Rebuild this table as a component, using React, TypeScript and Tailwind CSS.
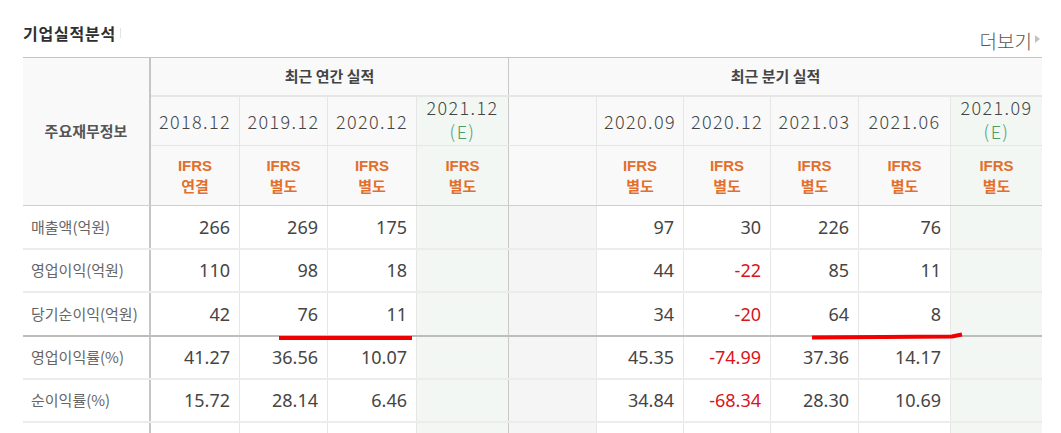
const KR = "font-['Noto_Sans_CJK_KR',sans-serif]";
const NUM = "font-['Noto_Sans','Noto_Sans_CJK_KR',sans-serif]";

type Val = string | number;

const annualDates = [
  { d: "2018.12", e: false },
  { d: "2019.12", e: false },
  { d: "2020.12", e: false },
  { d: "2021.12", e: true },
];
const quarterDates = [
  { d: "2020.09", e: false },
  { d: "2020.12", e: false },
  { d: "2021.03", e: false },
  { d: "2021.06", e: false },
  { d: "2021.09", e: true },
];
const annualSub = ["연결", "별도", "별도", "별도"];

const rows: { label: string; h: string; annual: Val[]; quarter: Val[]; bottom: string }[] = [
  { label: "매출액(억원)", h: "h-[44px]", annual: ["266", "269", "175", ""], quarter: ["97", "30", "226", "76", ""], bottom: "border-b-2 border-b-[#ececec]" },
  { label: "영업이익(억원)", h: "h-[43px]", annual: ["110", "98", "18", ""], quarter: ["44", "-22", "85", "11", ""], bottom: "border-b-2 border-b-[#ececec]" },
  { label: "당기순이익(억원)", h: "h-[44px]", annual: ["42", "76", "11", ""], quarter: ["34", "-20", "64", "8", ""], bottom: "border-b-2 border-b-[#bdbdbd]" },
  { label: "영업이익률(%)", h: "h-[43px]", annual: ["41.27", "36.56", "10.07", ""], quarter: ["45.35", "-74.99", "37.36", "14.17", ""], bottom: "border-b-2 border-b-[#ececec]" },
  { label: "순이익률(%)", h: "h-[43px]", annual: ["15.72", "28.14", "6.46", ""], quarter: ["34.84", "-68.34", "28.30", "10.69", ""], bottom: "border-b-2 border-b-[#ececec]" },
  { label: "", h: "h-[30px]", annual: ["", "", "", ""], quarter: ["", "", "", "", ""], bottom: "" },
];

const annualW = ["w-[89px]", "w-[88px]", "w-[89px]", "w-[92px]"];
const quarterW = ["w-[87px]", "w-[87px]", "w-[88px]", "w-[92px]", "w-[91px]"];

function NumCell({ v, w, green, last }: { v: Val; w: string; green: boolean; last?: boolean }) {
  const s = String(v);
  const neg = s.startsWith("-");
  return (
    <div
      className={`${w} shrink-0 flex items-center justify-end pr-[9px] text-[18px] ${NUM} ${
        neg ? "text-[#d9141c]" : "text-[#454545]"
      } ${green ? "bg-[#f2f7f3]" : "bg-white"} ${last ? "border-r border-r-[#c8c8c8]" : green ? "" : "border-r border-r-[#e6e6e6]"}`}
    >
      {s}
    </div>
  );
}

function DateCell({ d, e, w, last }: { d: string; e: boolean; w: string; last?: boolean }) {
  return (
    <div
      className={`${w} shrink-0 flex flex-col items-center justify-center text-[18px] leading-[22px] font-light tracking-[1.4px] text-[#444] ${KR} ${
        e ? "bg-[#f2f7f3] pb-[4px]" : "border-r border-r-[#e6e6e6]"
      } ${last ? "border-r border-r-[#c8c8c8]" : ""}`}
    >
      <span>{d}</span>
      {e && <span className="text-[#4f9a67] mt-[2px]">(E)</span>}
    </div>
  );
}

function IfrsCell({ sub, w, green, last }: { sub: string; w: string; green: boolean; last?: boolean }) {
  return (
    <div
      className={`${w} shrink-0 flex flex-col items-center justify-center text-[15px] leading-[20px] font-bold text-[#e36f2c] ${KR} ${
        green ? "bg-[#f2f7f3]" : "border-r border-r-[#e6e6e6]"
      } ${last ? "border-r border-r-[#c8c8c8]" : ""}`}
    >
      <span className="font-['Liberation_Sans',sans-serif]">IFRS</span>
      <span>{sub}</span>
    </div>
  );
}

export default function App() {
  return (
    <div className="relative w-[1061px] h-[433px] overflow-hidden bg-white">
      <div className="flex justify-between pl-[23px] pr-[21px] h-[57px]">
        <div className={`mt-[24px] leading-[18px] text-[16px] font-bold tracking-[0.8px] text-[#2f2f2f] ${KR} flex items-center gap-[4px] h-[18px]`}>
          기업실적분석
          <span className="w-px h-[10px] bg-[#e2e2e2]" />
        </div>
        <div className={`mt-[31px] leading-[20px] h-[20px] flex items-center gap-[3px] text-[19px] font-light text-[#555] ${KR}`}>
          더보기
          <svg width="5" height="8" viewBox="0 0 5 8" className="mt-[-4px]">
            <path d="M0 0 L5 4 L0 8 Z" fill="#c2c2c2" />
          </svg>
        </div>
      </div>

      <div className="ml-[23px] w-[1019px] border-t border-t-[#c4c4c4]">
        {/* header block */}
        <div className="flex">
          <div className={`w-[128px] h-[148px] shrink-0 flex items-center justify-center bg-[#f9f9f9] border-r-2 border-r-[#c6c6c6] border-b border-b-[#cfcfcf] text-[15px] font-bold text-[#555] ${KR}`}>
            주요재무정보
          </div>
          <div className="flex flex-col border-b border-b-[#cfcfcf]">
            <div className="flex h-[39px] border-b-2 border-b-[#e6e6e6]">
              <div className={`w-[358px] flex items-center justify-center bg-[#f9f9f9] border-r border-r-[#c8c8c8] text-[15px] font-bold text-[#444] ${KR}`}>
                최근 연간 실적
              </div>
              <div className={`w-[533px] flex items-center justify-center bg-[#f9f9f9] text-[15px] font-bold text-[#444] ${KR}`}>
                최근 분기 실적
              </div>
            </div>
            <div className="flex h-[49px] border-b border-b-[#e6e6e6] bg-[#f9f9f9]">
              {annualDates.map((a, i) => (
                <DateCell key={a.d} d={a.d} e={a.e} w={annualW[i]} last={i === 3} />
              ))}
              <div className="w-[88px] shrink-0 border-r border-r-[#e6e6e6]" />
              {quarterDates.map((q, i) => (
                <DateCell key={q.d + i} d={q.d} e={q.e} w={quarterW[i]} />
              ))}
            </div>
            <div className="flex h-[59px] bg-[#f9f9f9]">
              {annualSub.map((s, i) => (
                <IfrsCell key={i} sub={s} w={annualW[i]} green={i === 3} last={i === 3} />
              ))}
              <div className="w-[88px] shrink-0 border-r border-r-[#e6e6e6]" />
              {quarterW.map((w, i) => (
                <IfrsCell key={i} sub="별도" w={w} green={i === 4} />
              ))}
            </div>
          </div>
        </div>

        {/* data rows */}
        {rows.map((r, ri) => (
          <div key={ri} className={`flex ${r.h} ${r.bottom}`}>
            <div className={`w-[128px] shrink-0 flex items-center pl-[8px] bg-white border-r-2 border-r-[#c6c6c6] text-[15px] text-[#666] ${KR}`}>
              {r.label}
            </div>
            {r.annual.map((v, i) => (
              <NumCell key={i} v={v} w={annualW[i]} green={i === 3} last={i === 3} />
            ))}
            <div className="w-[88px] shrink-0 bg-[#f5f5f5] border-r border-r-[#e6e6e6]" />
            {r.quarter.map((v, i) => (
              <NumCell key={i} v={v} w={quarterW[i]} green={i === 4} />
            ))}
          </div>
        ))}
      </div>

      {/* red annotation underlines */}
      <svg className="absolute left-0 top-0 pointer-events-none" width="1061" height="433">
        <path d="M279 338 L412 338" stroke="#f00000" strokeWidth="4" />
        <path d="M812 337.5 L952 336.5 L962 334.5" stroke="#f00000" strokeWidth="4" fill="none" />
      </svg>
    </div>
  );
}
